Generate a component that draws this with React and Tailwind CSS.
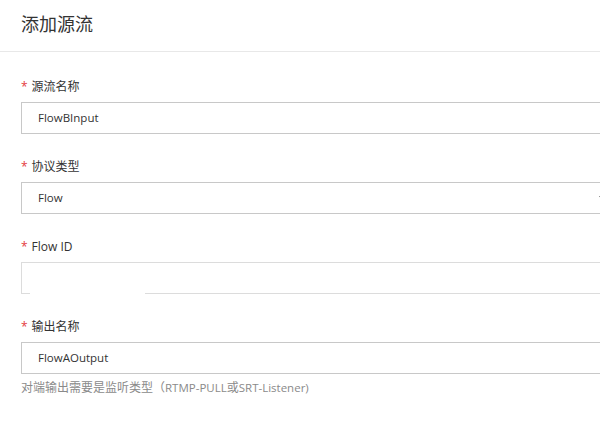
const font = { fontFamily: '"Open Sans", "Noto Sans CJK SC", sans-serif' };

function Label({ children }) {
  return (
    <div className="flex h-5 items-center text-[12px] leading-5 text-[#333]">
      <span className="mr-[4px] text-[#e4393c]">*</span>
      {children}
    </div>
  );
}

function Field({ label, children, className = "" }) {
  return (
    <div className={`mb-[23px] ${className}`}>
      <Label>{label}</Label>
      <div className="mt-[5px]">{children}</div>
    </div>
  );
}

function TextBox({ value, light = false, mask = false }) {
  return (
    <div
      className={`relative flex h-[32px] w-[590px] items-center border bg-white pl-[16px] text-[11.5px] text-[#333] ${
        light ? "border-[#dcdcdc]" : "border-[#c8c8c8]"
      }`}
    >
      {value}
      {mask && <div className="absolute bottom-[-1px] left-[8px] h-[2px] w-[115px] bg-white" />}
    </div>
  );
}

export default function App() {
  return (
    <div className="h-[434px] w-[600px] overflow-hidden bg-white" style={font}>
      <div className="flex h-[52px] items-center border-b border-[#e8e8e8] pl-[21px] pb-[2px] text-[18px] text-[#333]">
        添加源流
      </div>
      <div className="pl-[21px] pt-[25px]">
        <Field label="源流名称">
          <TextBox value="FlowBInput" />
        </Field>
        <Field label="协议类型">
          <div className="relative flex h-[32px] w-[590px] items-center border border-[#c8c8c8] bg-white pl-[16px] text-[11.5px] text-[#333]">
            Flow
            <span className="absolute right-[5px] top-[13px] h-0 w-0 border-x-[3px] border-t-[4px] border-x-transparent border-t-[#555]" />
          </div>
        </Field>
        <Field label="Flow ID">
          <TextBox value="" light mask />
        </Field>
        <div>
          <Label>输出名称</Label>
          <div className="mt-[5px]">
            <TextBox value="FlowAOutput" />
          </div>
          <div className="mt-[4px] text-[12px] leading-5 text-[#8a8a8a]">
            对端输出需要是监听类型（<span className="text-[11.5px]">RTMP-PULL</span>或<span className="text-[11.5px]">SRT-Listener)</span>
          </div>
        </div>
      </div>
    </div>
  );
}
